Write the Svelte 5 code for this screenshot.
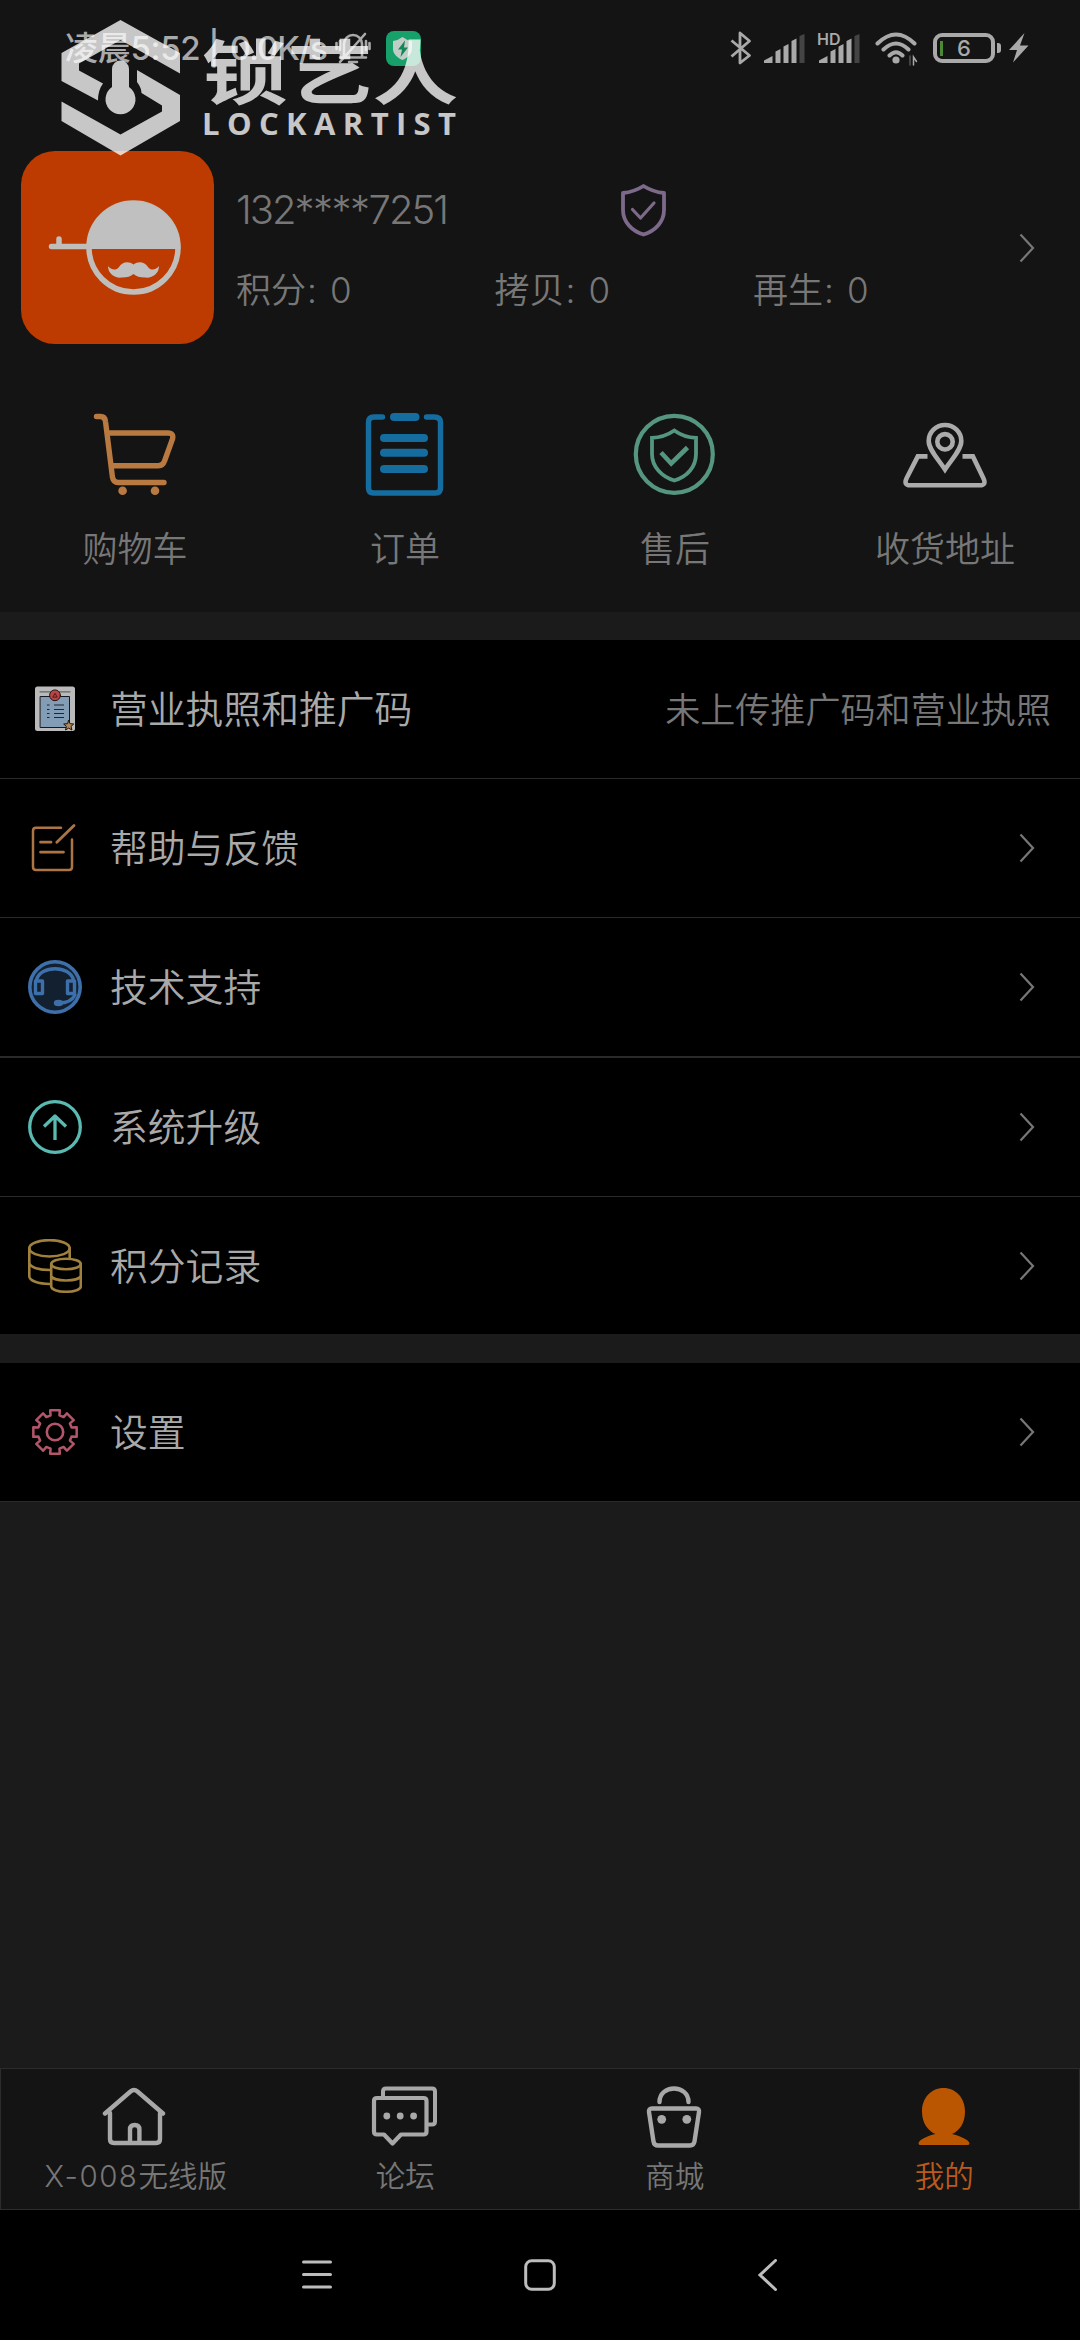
<script lang="ts">
	interface MenuItem {
		icon: string;
		label: string;
		note?: string;
	}

	const stats = [
		{ label: '积分', value: 0 },
		{ label: '拷贝', value: 0 },
		{ label: '再生', value: 0 }
	];

	const actions = [
		{ icon: 'cart', label: '购物车' },
		{ icon: 'order', label: '订单' },
		{ icon: 'service', label: '售后' },
		{ icon: 'address', label: '收货地址' }
	];

	const groups: MenuItem[][] = [
		[
			{ icon: 'license', label: '营业执照和推广码', note: '未上传推广码和营业执照' },
			{ icon: 'feedback', label: '帮助与反馈' },
			{ icon: 'support', label: '技术支持' },
			{ icon: 'upgrade', label: '系统升级' },
			{ icon: 'coins', label: '积分记录' }
		],
		[{ icon: 'gear', label: '设置' }]
	];

	const tabs = [
		{ icon: 'home', latin: 'X-008', label: '无线版' },
		{ icon: 'forum', latin: '', label: '论坛' },
		{ icon: 'shop', latin: '', label: '商城' },
		{ icon: 'me', latin: '', label: '我的' }
	];
	const activeTab = 'me';

	// eight-tooth gear outline around (27, 27)
	function gearPath() {
		const pts: string[] = [];
		for (let i = 0; i < 8; i++) {
			for (const [deg, r] of [[-15, 17.2], [-12.5, 22.2], [12.5, 22.2], [15, 17.2]]) {
				const a = ((i * 45 + deg) * Math.PI) / 180;
				pts.push(`${(27 + r * Math.cos(a)).toFixed(2)} ${(27 + r * Math.sin(a)).toFixed(2)}`);
			}
		}
		return 'M' + pts.join('L') + 'Z';
	}
</script>

{#snippet chevron()}
	<svg class="chevron" width="16" height="30" viewBox="0 0 16 30">
		<path d="M1.5 1.5L14 15L1.5 28.5" />
	</svg>
{/snippet}

{#snippet signal()}
	<path d="M0 29v-2.500l8.500-4.500v7zM11.500 29V17.500l5-2.500v14zM19.500 29V12.500l5-2.500v19zM27.500 29V7l5-2.500V29z" fill="#a9a9a9" />
	<path d="M35.500 29V2l5-2v29z" fill="#444" />
{/snippet}

{#snippet actionIcon(name: string)}
	<svg width="84" height="84" viewBox="0 0 84 84" fill="none" stroke-width="5.400" stroke-linecap="round">
		{#if name === 'cart'}
			<g stroke="#b87a40">
				<path d="M3.500 4.500h4q4.500 0 5 5l7 56q1 5 5.500 5h46" />
				<path d="M16 21h59q6 0 4.500 6l-8 22q-1.500 4.700-6 4.700H20" />
			</g>
			<circle cx="29.600" cy="78.700" r="4.300" fill="#b87a40" />
			<circle cx="62" cy="78.700" r="4.300" fill="#b87a40" />
		{:else if name === 'order'}
			<g stroke="#146c9f">
				<path d="M19.500 5H11Q5.500 5 5.500 10.500V76q0 5 5 5h62q5 0 5-5V10.500Q77.500 5 71 5h-7.500" />
				<path d="M31 5h21.500M21 26h40M21 40.700h40M21 57h40" stroke-width="8" />
			</g>
		{:else if name === 'service'}
			<g stroke="#559680" stroke-width="4.200">
				<circle cx="41.300" cy="42.300" r="38.500" />
				<path d="M41.300 18.500Q31 25.500 19 25.800V42c0 13 10 23 22.300 26.500C54 65 63 55 63 42V25.800Q51 25.500 41.300 18.500z" stroke-width="3.800" />
				<path d="M28 40.500l10.200 11L54.500 35.500" stroke-width="4.600" stroke-linecap="butt" />
			</g>
		{:else}
			<g stroke="#ababab" stroke-width="4.600">
				<path d="M24.500 44.400h-9.700L3.700 66q-3.500 7.300 3.500 7.300h69.600q7 0 3.500-7.300L69.900 44.400h-10.400" stroke-linecap="butt" />
				<path d="M42 57.500C36 48 25.700 38 25.700 29a16.300 16 0 0 1 32.600 0C58.300 38 48 48 42 57.500z" />
				<circle cx="42" cy="29.800" r="7.700" />
			</g>
		{/if}
	</svg>
{/snippet}

{#snippet menuIcon(name: string)}
	<svg width="54" height="54" viewBox="0 0 54 54" fill="none" stroke-linecap="round" stroke-linejoin="round">
		{#if name === 'license'}
			<rect x="7" y="4.500" width="40" height="44.500" rx="2.500" fill="#bababa" />
			<path d="M12 9.800h30" stroke="#666" stroke-width="1.300" />
			<rect x="12.500" y="14.500" width="29" height="31" fill="#829db5" stroke="#151a22" />
			<path d="M19 23h2.500M26 23h10M19 27.500h2.500M26 27.500h10M19 31.500h2.500M26 31.500h10M19 35.500h2.500M26 35.500h10" stroke="#20262e" stroke-width="1.200" stroke-linecap="butt" />
			<circle cx="27" cy="13.300" r="5.400" fill="#b64747" stroke="#301010" />
			<path d="M25 14.800l2-3.500 2 3.500z" stroke="#501818" />
			<path d="M40.700 38.500l1.400 3.200 3.600.3-2.700 2.400.9 3.600-3.200-1.900-3.200 1.900.9-3.600-2.700-2.400 3.600-.3z" fill="#b28a58" stroke="#1c140c" />
		{:else if name === 'feedback'}
			<g stroke="#ad7444" stroke-width="2.500">
				<path d="M33 6.700H8Q5 6.700 5 9.700V46q0 3 3 3h33q3 0 3-3V18.500" />
				<path d="M28.800 21.300L46 4.500" stroke-width="2.800" />
				<path d="M12.500 21.200H23M12.500 31.200H35.500" stroke-width="2.700" />
			</g>
		{:else if name === 'support'}
			<circle cx="27" cy="27" r="25.200" fill="#13202f" stroke="#3d70aa" stroke-width="3.600" />
			<g stroke="#3d70aa" stroke-width="3.400">
				<path d="M8.500 20C12 5 42 5 45.500 20" />
				<rect x="7.500" y="21" width="7" height="12.500" />
				<rect x="39.500" y="21" width="7" height="12.500" />
				<path d="M47 35Q43 43 31 43" />
			</g>
			<ellipse cx="30.500" cy="43" rx="4.700" ry="3.200" fill="#3d70aa" />
		{:else if name === 'upgrade'}
			<g stroke="#5ab9b0">
				<circle cx="27" cy="27" r="25.300" stroke-width="3.300" />
				<path d="M27 40V16M16 26.500L27 16l11 10.500" stroke-width="3.300" stroke-linecap="butt" />
			</g>
		{:else if name === 'coins'}
			<g stroke="#a0803d" stroke-width="2.600">
				<ellipse cx="21.500" cy="9.300" rx="20.200" ry="8.200" />
				<path d="M1.300 9.300v28c0 4.500 9 7.700 20.500 7.700M41.700 9.300v9.500M1.300 24c1 4.500 10 7 20.500 7" />
				<ellipse cx="38" cy="25" rx="14.800" ry="5.300" />
				<path d="M23.200 25v22.500c1 7 28.600 7 29.600 0V25M23.200 37c2 6 27.600 6 29.600 0" />
			</g>
		{:else}
			<g stroke="#b3566b" stroke-width="2.500">
				<path d={gearPath()} />
				<circle cx="27" cy="27" r="8.200" stroke-width="2.600" />
			</g>
		{/if}
	</svg>
{/snippet}

{#snippet tabIcon(name: string)}
	<svg width="68" height="64" viewBox="0 0 68 64" fill="none" stroke="#a8a8a8" stroke-width="4.400" stroke-linecap="round" stroke-linejoin="round">
		{#if name === 'home'}
			<path d="M4 28.500L29.500 6.500q3.500-3 7 0L62 28.500M9 28v26q0 4 4 4h42q4 0 4-4V28" transform="translate(-1 0)" />
			<path d="M28 57V44.500q0-4.500 4.700-4.500t4.700 4.500V57" />
		{:else if name === 'forum'}
			<path d="M12 12V6.500q0-3 3-3h46q3 0 3 3v30q0 3-3 3h-3" stroke-width="4" />
			<path d="M6 13h46.500q3 0 3 3v30.500q0 3-3 3H30l-8.500 9L13 49.500H6q-3 0-3-3V16q0-3 3-3z" stroke-width="4.200" />
			<g fill="#a8a8a8" stroke="none">
				<circle cx="15.800" cy="31" r="3.400" />
				<circle cx="29.200" cy="31" r="3.400" />
				<circle cx="42.600" cy="31" r="3.400" />
			</g>
		{:else if name === 'shop'}
			<path d="M18.500 17C18.500-1 47.500-1 47.500 17" />
			<path d="M11 23.500h44q3.500 0 3 3.500l-4.500 29.500q-.7 4-4.500 4H17q-3.800 0-4.500-4L8 27q-.5-3.500 3-3.500z" />
			<circle cx="20.700" cy="34.300" r="4.400" fill="#a8a8a8" stroke="none" />
			<circle cx="45.800" cy="34.300" r="4.400" fill="#a8a8a8" stroke="none" />
		{:else}
			<path d="M33.500 3C21 3 12 13 12 26.500C12 38 18 46 25.500 49C17 51 8.500 55 8.500 58.500Q8.500 60 10.500 60h46.500Q59.500 60 59.500 58.500C59.500 55 50 51 42 49C49.500 46 55 38 55 26.500C55 13 46 3 33.500 3z" fill="#ba5602" stroke="none" />
		{/if}
	</svg>
{/snippet}

<div class="screen">
	<header>
		<div class="status-bar">
			<div class="status-left">
				<span class="clock">凌晨5:52</span>
				<span class="divider">|</span>
				<span class="speed">0.0K/s</span>
				<svg width="36" height="34" viewBox="0 0 36 34" fill="none" stroke="#a9a9a9" stroke-width="2.600" stroke-linecap="round">
					<path d="M9 26V13a9 9 0 0 1 18 0v13M5 26.500h26M14 31h8M5 31L30 3" />
					<path d="M1.500 12v6M34.500 12v6M5 10v9M31 10v9" />
				</svg>
				<svg class="guard" width="35" height="35" viewBox="0 0 35 35">
					<rect width="35" height="35" rx="8" fill="#18a06a" />
					<path d="M16.500 6Q12 9.500 7 10v8c0 5.500 5 9 9.500 11 4.500-2 9.500-5.500 9.500-11v-8Q21 9.500 16.500 6z" fill="#c0cec7" />
					<path d="M19 9.500L12 18.500h4L14.500 26l7.500-9.500h-4z" fill="#168557" />
				</svg>
			</div>
			<div class="status-right">
				<svg class="bluetooth" width="22" height="36" viewBox="0 0 22 36" fill="none" stroke="#a9a9a9" stroke-width="2.800" stroke-linejoin="round">
					<path d="M1.500 10.500L19.500 25.500L10 33V3l9.500 8L1.500 26.500" />
				</svg>
				<svg class="bars" width="41" height="29" viewBox="0 0 41 29">{@render signal()}</svg>
				<div class="hd-signal">
					<svg width="41" height="29" viewBox="0 0 41 29">
						<g>{@render signal()}</g>
						<path d="M0 0h21v11.500l-6 3H0z" fill="#141414" />
					</svg>
					<span class="hd">HD</span>
				</div>
				<svg class="wifi" width="43" height="35" viewBox="0 0 43 35" fill="none" stroke="#a9a9a9" stroke-width="4" stroke-linecap="round">
					<path d="M2.500 11.500Q21 -6.500 39.500 11.500M8.500 17.500Q21 5.500 33.500 17.500M14.500 23.500Q21 17 27.500 23.500" />
					<circle cx="21" cy="28" r="3.600" fill="#a9a9a9" stroke="none" />
					<path d="M35 24v9" stroke="#555" stroke-width="1.500" />
					<path d="M38.500 33v-8l3 4.500" stroke-width="1.500" />
				</svg>
				<div class="battery"><span class="charge"></span><span class="level">6</span></div>
				<span class="nub"></span>
				<svg class="bolt" width="20" height="30" viewBox="0 0 20 30">
					<path d="M15.500 0L0 17h8L4 29.500L19.500 12.500H11z" fill="#a9a9a9" />
				</svg>
			</div>
		</div>

		<div class="profile">
			<svg class="avatar" width="193" height="193" viewBox="0 0 193 193">
				<rect width="193" height="193" rx="34" fill="#bd3b00" />
				<circle cx="112.500" cy="96.500" r="44.500" fill="none" stroke="#c0beba" stroke-width="5.500" />
				<path d="M65.500 98a47 47 0 0 1 94 0z" fill="#c0c0c0" />
				<path d="M30.500 95.500H67M38 95V88" stroke="#c0beba" stroke-width="5.500" stroke-linecap="round" />
				<path d="M112.500 113.500C118 109.500 124 111.500 127 116C130 120 135 119 138 115C138 123 131 127.500 124 126.500C119 126.500 115 125.500 112.500 123C110 125.500 106 126.500 101 126.500C94 127.500 87 123 87 115C90 119 95 120 98 116C101 111.500 107 109.500 112.500 113.500z" fill="#c0c0c0" />
			</svg>
			<div class="user">
				<div class="name-row">
					<span class="phone">132<i>****</i>7251</span>
					<svg width="48" height="54" viewBox="0 0 48 54" fill="none" stroke="#7d6a8b" stroke-width="3.800" stroke-linecap="round" stroke-linejoin="round">
						<path d="M23.500 3Q14 9 3 10V27C3 39 12 48 23.500 51.500C35 48 44 39 44 27V10Q33 9 23.500 3z" />
						<path d="M12.500 26.500l8 8.500L34 20" stroke-width="3.200" />
					</svg>
				</div>
				<div class="stats">
					{#each stats as stat}
						<span>{stat.label}<b>:</b>{stat.value}</span>
					{/each}
				</div>
			</div>
			{@render chevron()}
		</div>

		<nav class="actions">
			{#each actions as action}
				<div class="action">
					{@render actionIcon(action.icon)}
					<span>{action.label}</span>
				</div>
			{/each}
		</nav>

		<!-- watermark lies over the status bar -->
		<svg class="logo" width="400" height="140" viewBox="60 18 400 140" fill="#fff">
			<path d="M120.500 20L180 53V73.500L120.500 40L79 63.500V70.500L103 83.500Q98 90 98 100.500L61.500 81V53z" />
			<path d="M137 70L180 95V121L120.500 155.500L61.500 121V101.500L120.500 134.500L162 111.500V105.500L141.500 93Q141.500 88 137 82z" />
			<path d="M112 69a8.500 8.500 0 0 1 17 0V87a15 15 0 1 1-17 0z" />
			<text class="logo-cn" x="202" y="99" textLength="256" lengthAdjust="spacingAndGlyphs">锁艺人</text>
			<text class="logo-en" x="202" y="135" textLength="254">LOCKARTIST</text>
		</svg>
	</header>

	{#each groups as group}
		<section>
			{#each group as item}
				<div class="row">
					{@render menuIcon(item.icon)}
					<span class="label">{item.label}</span>
					{#if item.note}
						<span class="note">{item.note}</span>
					{:else}
						{@render chevron()}
					{/if}
				</div>
			{/each}
		</section>
	{/each}

	<footer>
		<nav class="tabs">
			{#each tabs as tab}
				<div class="tab" class:active={tab.icon === activeTab}>
					{@render tabIcon(tab.icon)}
					<span><em>{tab.latin}</em>{tab.label}</span>
				</div>
			{/each}
		</nav>
		<div class="system-nav">
			<svg width="30" height="30" viewBox="0 0 30 30"><path d="M1.500 2h27M1.500 14.500h27M1.500 27h27" /></svg>
			<svg width="32" height="32" viewBox="0 0 32 32"><rect x="1.700" y="1.700" width="28.600" height="28.600" rx="6" /></svg>
			<svg width="20" height="32" viewBox="0 0 20 32"><path d="M17.500 1.500L2 16l15.500 14.500" /></svg>
		</div>
	</footer>
</div>

<style>
	:global(body) {
		background: #000;
	}

	.screen {
		width: 1080px;
		height: 2340px;
		display: flex;
		flex-direction: column;
		background: #1b1b1b;
		color: #777;
		font-family: Inter, 'Noto Sans CJK SC', sans-serif;
		font-weight: 350;
		line-height: 1;
		white-space: nowrap;
		overflow: hidden;
	}

	svg {
		display: block;
		flex: none;
	}

	header {
		position: relative;
		height: 612px;
		background: #141414;
	}

	.status-bar {
		display: flex;
		justify-content: space-between;
		height: 96px;
		padding: 0 51px 0 65px;
		color: #a9a9a9;
		font-weight: 500;
	}

	.status-left,
	.status-right {
		display: flex;
		align-items: center;
		height: 96px;
	}

	.status-left {
		font-size: 33px;
	}

	.clock {
		letter-spacing: -0.3px;
	}

	.divider {
		margin: 0 10px 0 8px;
	}

	.speed {
		margin-right: 8px;
		letter-spacing: -1.1px;
	}

	.guard {
		margin-left: 15px;
	}

	.bluetooth {
		margin-right: 12px;
	}

	.bars {
		margin-right: 14px;
	}

	.hd-signal {
		position: relative;
	}

	.hd {
		position: absolute;
		left: -2px;
		top: -3px;
		font-size: 16px;
		font-weight: 600;
	}

	.wifi {
		margin: 2px 15px 0 15px;
	}

	.battery {
		box-sizing: border-box;
		display: flex;
		align-items: center;
		width: 62px;
		height: 30px;
		border: 4px solid #a9a9a9;
		border-radius: 9px;
	}

	.charge {
		width: 3px;
		height: 15px;
		margin-left: 3px;
		background: #4b8a34;
	}

	.level {
		width: 42px;
		font-size: 22px;
		text-align: center;
	}

	.nub {
		width: 4px;
		height: 10px;
		margin: 0 8px 0 2px;
		border-radius: 0 3px 3px 0;
		background: #a9a9a9;
	}

	.profile {
		display: flex;
		align-items: center;
		margin-top: 55px;
		padding: 0 45px 0 21px;
	}

	.user {
		flex: 1;
		margin-left: 22px;
		padding-bottom: 4px;
	}

	.name-row {
		display: flex;
		align-items: center;
		height: 54px;
	}

	.phone {
		width: 384px;
		font-size: 40px;
		letter-spacing: -2px;
	}

	.phone i {
		font-style: normal;
		letter-spacing: -1.500px;
	}

	.stats {
		display: flex;
		margin-top: 36px;
		font-size: 35px;
	}

	.stats span {
		width: 258.500px;
	}

	.stats b {
		display: inline-block;
		box-sizing: border-box;
		width: 24px;
		padding-left: 1px;
		font-weight: 350;
	}

	.chevron {
		fill: none;
		stroke: #777;
		stroke-width: 2.200px;
	}

	.actions {
		display: grid;
		grid-template-columns: repeat(4, 1fr);
		margin-top: 68px;
	}

	.action {
		display: flex;
		flex-direction: column;
		align-items: center;
		gap: 36px;
		font-size: 35px;
	}

	.logo {
		position: absolute;
		left: 60px;
		top: 18px;
		opacity: 0.76;
	}

	.logo-cn {
		font-family: 'Noto Sans CJK SC', sans-serif;
		font-size: 70px;
		font-weight: 700;
	}

	.logo-en {
		font-family: 'Open Sans', sans-serif;
		font-size: 31px;
		font-weight: 700;
	}

	section {
		margin-top: 28px;
		background: #000;
	}

	.row {
		box-sizing: border-box;
		display: flex;
		align-items: center;
		height: 139px;
		padding: 0 45px 0 28px;
		border-bottom: 1px solid #2a2a2a;
	}

	.row:nth-child(3) {
		height: 140px;
		border-bottom-width: 2px;
	}

	.row:nth-child(5) {
		height: 138px;
		border-bottom-color: #1b1b1b;
	}

	.label {
		flex: 1;
		margin-left: 28px;
		padding-top: 2px;
		color: #a9a9a9;
		font-size: 37.800px;
	}

	.note {
		margin-right: -16px;
		padding-top: 3px;
		font-size: 35.100px;
	}

	footer {
		margin-top: auto;
	}

	.tabs {
		box-sizing: border-box;
		display: grid;
		grid-template-columns: repeat(4, 1fr);
		height: 142px;
		border: 1px solid #2c2c2c;
		background: #141414;
	}

	.tab {
		display: flex;
		flex-direction: column;
		align-items: center;
		gap: 13px;
		padding-top: 16px;
		font-size: 29.500px;
	}

	.tab em {
		font-style: normal;
		letter-spacing: 1.500px;
	}

	.tab.active {
		color: #ba5a1c;
	}

	.system-nav {
		display: flex;
		justify-content: center;
		align-items: center;
		gap: 192px;
		height: 130px;
		background: #000;
	}

	.system-nav svg {
		fill: none;
		stroke: #bdbdbd;
		stroke-width: 3px;
		stroke-linecap: round;
	}

	.system-nav svg:last-child {
		margin-left: 10px;
	}
</style>
